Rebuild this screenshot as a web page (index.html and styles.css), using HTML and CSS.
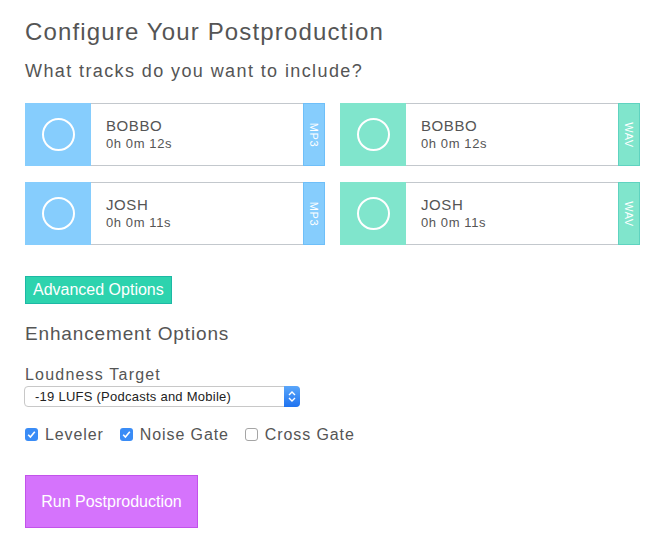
FILE: index.html
```
<!DOCTYPE html>
<html lang="en">
<head>
  <meta charset="UTF-8">
  <meta name="viewport" content="width=device-width, initial-scale=1.0">
  <title>Configure Your Postproduction</title>
  <link rel="stylesheet" href="styles.css">
</head>
<body>
  <div class="page">
    <h1>Configure Your Postproduction</h1>
    <h2>What tracks do you want to include?</h2>

    <!-- Track list -->
    <div class="tracks">
      <div class="track mp3">
        <div class="track-icon"><span class="ring"></span></div>
        <div class="track-info">
          <div class="track-name">BOBBO</div>
          <div class="track-time">0h 0m 12s</div>
        </div>
        <div class="track-type"><span>MP3</span></div>
      </div>
      <div class="track wav">
        <div class="track-icon"><span class="ring"></span></div>
        <div class="track-info">
          <div class="track-name">BOBBO</div>
          <div class="track-time">0h 0m 12s</div>
        </div>
        <div class="track-type"><span>WAV</span></div>
      </div>
      <div class="track mp3">
        <div class="track-icon"><span class="ring"></span></div>
        <div class="track-info">
          <div class="track-name">JOSH</div>
          <div class="track-time">0h 0m 11s</div>
        </div>
        <div class="track-type"><span>MP3</span></div>
      </div>
      <div class="track wav">
        <div class="track-icon"><span class="ring"></span></div>
        <div class="track-info">
          <div class="track-name">JOSH</div>
          <div class="track-time">0h 0m 11s</div>
        </div>
        <div class="track-type"><span>WAV</span></div>
      </div>
    </div>

    <button class="btn-advanced">Advanced Options</button>

    <h3>Enhancement Options</h3>

    <label class="field-label" for="loudness">Loudness Target</label>
    <div class="select-wrap">
      <select id="loudness">
        <option>-19 LUFS (Podcasts and Mobile)</option>
        <option>-16 LUFS</option>
        <option>-23 LUFS (Broadcast)</option>
      </select>
      <svg class="select-arrows" width="16" height="21" viewBox="0 0 16 21">
        <path d="M5 9 L8 6 L11 9 M5 12 L8 15 L11 12" fill="none" stroke="#fff" stroke-width="1.4"/>
      </svg>
    </div>

    <div class="checks">
      <label class="check">
        <span class="box on"><svg width="13" height="13" viewBox="0 0 13 13"><path d="M3.2 6.8 L5.4 9 L9.8 3.8" fill="none" stroke="#fff" stroke-width="1.6"/></svg></span>
        Leveler
      </label>
      <label class="check">
        <span class="box on"><svg width="13" height="13" viewBox="0 0 13 13"><path d="M3.2 6.8 L5.4 9 L9.8 3.8" fill="none" stroke="#fff" stroke-width="1.6"/></svg></span>
        Noise Gate
      </label>
      <label class="check">
        <span class="box"></span>
        Cross Gate
      </label>
    </div>

    <button class="btn-run">Run Postproduction</button>
  </div>
</body>
</html>
```

FILE: styles.css
```
body {
  margin: 0;
  font-family: "Liberation Sans", Arial, sans-serif;
  color: #555;
  background-color: #fff;
}

.page {
  padding: 18px 25px 0 25px;
}

h1 {
  margin: 0;
  font-size: 24px;
  line-height: 28px;
  font-weight: normal;
  letter-spacing: 1.15px;
}

h2 {
  margin: 14px 0 0 0;
  font-size: 18px;
  line-height: 22px;
  font-weight: normal;
  letter-spacing: 1.4px;
}

.tracks {
  display: grid;
  grid-template-columns: 300px 300px;
  column-gap: 15px;
  row-gap: 16px;
  margin-top: 21px;
}

.track {
  display: flex;
  height: 63px;
}

.track-icon {
  width: 66px;
  display: flex;
  align-items: center;
  justify-content: center;
}

.ring {
  width: 29px;
  height: 29px;
  border: 2px solid #fff;
  border-radius: 50%;
}

.track-info {
  flex: 1;
  border-top: 1px solid #c3c8cd;
  border-bottom: 1px solid #c3c8cd;
  padding: 13px 0 0 15px;
}

.track-name {
  font-size: 15px;
  line-height: 17px;
  letter-spacing: 0.6px;
}

.track-time {
  font-size: 13px;
  line-height: 17px;
  letter-spacing: 0.6px;
  margin-top: 1px;
}

.track-type {
  width: 20px;
  display: flex;
  align-items: center;
  justify-content: center;
  color: #fff;
  font-size: 11px;
  letter-spacing: 0.6px;
}

.track-type span {
  transform: rotate(90deg);
  white-space: nowrap;
}

.mp3 .track-icon {
  background-color: #86cdfd;
}

.mp3 .track-type {
  background-color: #86cdfd;
  border: 1px solid #6ebff9;
}

.wav .track-icon {
  background-color: #80e5cc;
}

.wav .track-type {
  background-color: #80e5cc;
  border: 1px solid #5fd3c0;
}

.btn-advanced {
  display: block;
  margin-top: 31px;
  height: 28px;
  padding: 0 7px;
  font-family: inherit;
  font-size: 16px;
  color: #fff;
  background-color: #2dd3ae;
  border: 1px solid #1db8a5;
  border-radius: 0;
}

h3 {
  margin: 19px 0 0 0;
  font-size: 19px;
  line-height: 22px;
  font-weight: normal;
  letter-spacing: 0.85px;
}

.field-label {
  display: block;
  margin-top: 20px;
  font-size: 16px;
  line-height: 19px;
  letter-spacing: 1.2px;
}

.select-wrap {
  position: relative;
  width: 276px;
  height: 21px;
  margin: 2px 0 0 -1px;
}

.select-wrap select {
  appearance: none;
  -webkit-appearance: none;
  width: 100%;
  height: 21px;
  padding: 0 0 0 10px;
  font-family: "Liberation Sans", Arial, sans-serif;
  font-size: 13px;
  letter-spacing: 0.25px;
  color: #222;
  background-color: #fff;
  border: 1px solid #c8c8c8;
  border-radius: 4px;
  outline: none;
}

.select-arrows {
  position: absolute;
  top: 0;
  right: 0;
  background: linear-gradient(#5aa6fa, #1f73f0);
  border-radius: 0 4px 4px 0;
  pointer-events: none;
}

.checks {
  display: flex;
  gap: 16px;
  margin-top: 18px;
}

.check {
  display: flex;
  align-items: center;
  gap: 7px;
  font-size: 16px;
  line-height: 19px;
  letter-spacing: 0.9px;
}

.box {
  width: 13px;
  height: 13px;
  box-sizing: border-box;
  border: 1px solid #a5a5a5;
  border-radius: 3px;
  background-color: #fff;
  display: flex;
}

.box.on {
  border: none;
  background-color: #3a8cf6;
}

.btn-run {
  display: block;
  margin-top: 31px;
  width: 173px;
  height: 53px;
  font-family: inherit;
  font-size: 16px;
  color: #fff;
  background-color: #d573fc;
  border: 1px solid #c253ea;
  border-radius: 0;
}
```
